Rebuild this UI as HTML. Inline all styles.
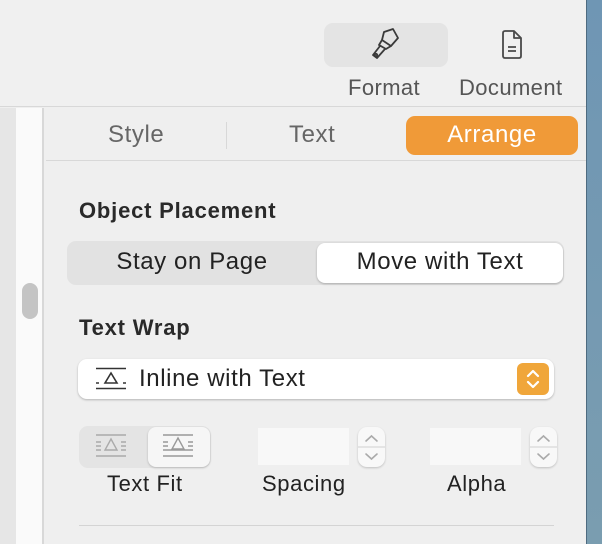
<!DOCTYPE html>
<html><head><style>
*{margin:0;padding:0;box-sizing:border-box}
body{width:602px;height:544px;overflow:hidden;background:#efefef;font-family:"Liberation Sans",sans-serif;position:relative}
.a{position:absolute}
.t{position:absolute;white-space:nowrap;letter-spacing:0.6px}
</style></head><body>
<div class="a" style="left:586px;top:0;width:16px;height:544px;background:linear-gradient(#6f96b4,#7a9db0);border-left:1px solid #4e6b80"></div>
<div class="a" style="left:0;top:0;width:586px;height:107px;background:#f0f0f0;border-bottom:1px solid #d8d8d8"></div>
<div class="a" style="left:324px;top:23px;width:124px;height:44px;background:#e4e4e4;border-radius:9px"></div>
<svg class="a" style="left:370px;top:28px" width="32" height="34" viewBox="0 0 32 34" fill="none" stroke="#3a3a3a" stroke-width="1.8" stroke-linejoin="round">
<path d="M14 4 L23 1 L28 10 L21 18 L12 12 Z"/><path d="M12 12 L9 17 L16 21 L21 18"/><path d="M10 18 L3 27 L7 30 L15 21"/><circle cx="6" cy="27" r="1.2"/></svg>
<svg class="a" style="left:500px;top:30px" width="24" height="30" viewBox="0 0 24 30" fill="none" stroke="#4a4a4a" stroke-width="1.8" stroke-linejoin="round">
<path d="M3 3 Q3 1 5 1 L14 1 L21 8 L21 26 Q21 28 19 28 L5 28 Q3 28 3 26 Z"/><path d="M14 1 L14 8 L21 8"/><path d="M8 17 H16 M8 21 H16"/></svg>
<div class="t" style="left:348px;top:75px;font-size:22px;color:#555;letter-spacing:0.4px">Format</div>
<div class="t" style="left:459px;top:75px;font-size:22px;color:#555;letter-spacing:0.4px">Document</div>
<div class="a" style="left:0;top:108px;width:16px;height:436px;background:#e6e6e6"></div>
<div class="a" style="left:16px;top:108px;width:28px;height:436px;background:#fafafa;border-right:2px solid #d8d8d8"></div>
<div class="a" style="left:22px;top:283px;width:16px;height:36px;background:#c4c4c4;border-radius:8px"></div>
<div class="a" style="left:46px;top:160px;width:540px;height:1px;background:#d8d8d8"></div>
<div class="t" style="left:108px;top:121px;font-size:24px;color:#666">Style</div>
<div class="a" style="left:226px;top:122px;width:1px;height:27px;background:#d8d8d8"></div>
<div class="t" style="left:289px;top:121px;font-size:24px;color:#666">Text</div>
<div class="a" style="left:406px;top:116px;width:172px;height:39px;background:#f09a38;border-radius:9px"></div>
<div class="t" style="left:406px;top:121px;width:172px;text-align:center;font-size:24px;color:#fff">Arrange</div>
<div class="t" style="left:79px;top:198px;font-size:22px;font-weight:bold;color:#2a2a2a;letter-spacing:0.8px">Object Placement</div>
<div class="a" style="left:67px;top:241px;width:497px;height:44px;background:#e2e2e2;border-radius:9px"></div>
<div class="a" style="left:317px;top:243px;width:246px;height:40px;background:#fff;border-radius:8px;box-shadow:0 1px 2px rgba(0,0,0,.25)"></div>
<div class="t" style="left:67px;top:248px;width:250px;text-align:center;font-size:24px;color:#222">Stay on Page</div>
<div class="t" style="left:317px;top:248px;width:246px;text-align:center;font-size:24px;color:#222">Move with Text</div>
<div class="t" style="left:79px;top:315px;font-size:22px;font-weight:bold;color:#2a2a2a;letter-spacing:0.8px">Text Wrap</div>
<div class="a" style="left:78px;top:359px;width:476px;height:40px;background:#fff;border-radius:9px;box-shadow:0 1px 2px rgba(0,0,0,.25)"></div>
<svg class="a" style="left:96px;top:367px" width="32" height="24" viewBox="0 0 32 24" fill="none" stroke="#333" stroke-width="1.6">
<path d="M0 1.5H30M0 21.5H30M0 16H3M27 16H30"/><path d="M15 6 L21 16 L9 16 Z"/></svg>
<div class="t" style="left:139px;top:365px;font-size:24px;color:#222">Inline with Text</div>
<div class="a" style="left:517px;top:363px;width:32px;height:32px;background:#f0a63a;border-radius:6px"></div>
<svg class="a" style="left:517px;top:363px" width="32" height="32" viewBox="0 0 32 32" fill="none" stroke="#fff" stroke-width="2.2" stroke-linecap="round" stroke-linejoin="round"><path d="M11 13 L16 8 L21 13 M11 19 L16 24 L21 19"/></svg>
<div class="a" style="left:79px;top:426px;width:132px;height:42px;background:#e4e4e4;border-radius:9px"></div>
<div class="a" style="left:148px;top:427px;width:62px;height:40px;background:#f6f6f6;border-radius:8px;box-shadow:0 1px 2px rgba(0,0,0,.2)"></div>
<svg class="a" style="left:96px;top:434px" width="32" height="24" viewBox="0 0 32 24" fill="none" stroke="#aaa" stroke-width="1.4"><path d="M0 1H30M0 22H30M0 8H5M0 12H5M0 16H5M25 8H30M25 12H30M25 16H30"/><path d="M15 5 L21 16 L9 16 Z"/></svg>
<svg class="a" style="left:163px;top:434px" width="32" height="24" viewBox="0 0 32 24" fill="none" stroke="#999" stroke-width="1.4"><path d="M0 1H30M0 22H30M0 8H5M0 12H5M0 16H30M25 8H30M25 12H30"/><path d="M15 4 L21 15 L9 15 Z"/></svg>
<div class="t" style="left:107px;top:471px;font-size:22px;color:#222">Text Fit</div>
<div class="a" style="left:258px;top:428px;width:91px;height:37px;background:#f8f8f8"></div>
<div class="a" style="left:358px;top:427px;width:27px;height:40px;background:#f8f8f8;border-radius:9px;box-shadow:0 1px 2px rgba(0,0,0,.2)"></div>
<svg class="a" style="left:358px;top:427px" width="27" height="40" viewBox="0 0 27 40" fill="none" stroke="#aaa" stroke-width="1.6" stroke-linecap="round"><path d="M8 14 L13.5 9 L19 14 M8 27 L13.5 32 L19 27"/><path d="M0 20H27" stroke="#ddd"/></svg>
<div class="t" style="left:262px;top:471px;font-size:22px;color:#222">Spacing</div>
<div class="a" style="left:430px;top:428px;width:91px;height:37px;background:#f8f8f8"></div>
<div class="a" style="left:530px;top:427px;width:27px;height:40px;background:#f8f8f8;border-radius:9px;box-shadow:0 1px 2px rgba(0,0,0,.2)"></div>
<svg class="a" style="left:530px;top:427px" width="27" height="40" viewBox="0 0 27 40" fill="none" stroke="#aaa" stroke-width="1.6" stroke-linecap="round"><path d="M8 14 L13.5 9 L19 14 M8 27 L13.5 32 L19 27"/><path d="M0 20H27" stroke="#ddd"/></svg>
<div class="t" style="left:447px;top:471px;font-size:22px;color:#222">Alpha</div>
<div class="a" style="left:79px;top:525px;width:475px;height:1px;background:#d4d4d4"></div>
</body></html>
